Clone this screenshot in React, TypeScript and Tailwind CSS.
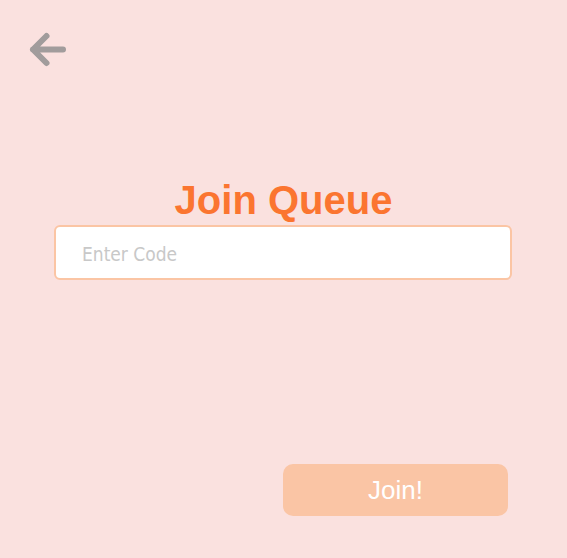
import React from "react";

export default function App() {
  return (
    <div className="min-h-[558px] w-full bg-[#fae1df] flex flex-col" style={{ fontFamily: '"Liberation Sans", Arial, sans-serif' }}>
      <div className="pl-[28px] pt-[30px]">
        <svg width="40" height="40" viewBox="0 0 40 40" className="block">
          <path d="M5 19.5 H35 M5 19.5 L18.5 6 M5 19.5 L18.5 33" stroke="#a19c9c" strokeWidth="6" strokeLinecap="round" strokeLinejoin="round" fill="none" />
        </svg>
      </div>
      <h1 className="mt-[107px] text-center text-[40px] leading-[46px] font-bold text-[#fb7530]">Join Queue</h1>
      <div className="px-[54px] mt-[2px] pr-[55px]">
        <input
          placeholder="Enter Code"
          className="w-full h-[55px] rounded-[6px] border-2 border-[#fbc5a4] bg-white pl-[26px] pt-[3px] text-[19px] text-gray-700 placeholder:text-[#c8c8c8] outline-none"
          style={{ fontFamily: '"DejaVu Sans Condensed", "DejaVu Sans", Tahoma, sans-serif', fontStretch: "condensed" }}
        />
      </div>
      <div className="flex justify-end pr-[59px] mt-[184px]">
        <button className="w-[225px] h-[52px] rounded-[10px] bg-[#fac5a5] text-white text-[26px]">Join!</button>
      </div>
    </div>
  );
}
